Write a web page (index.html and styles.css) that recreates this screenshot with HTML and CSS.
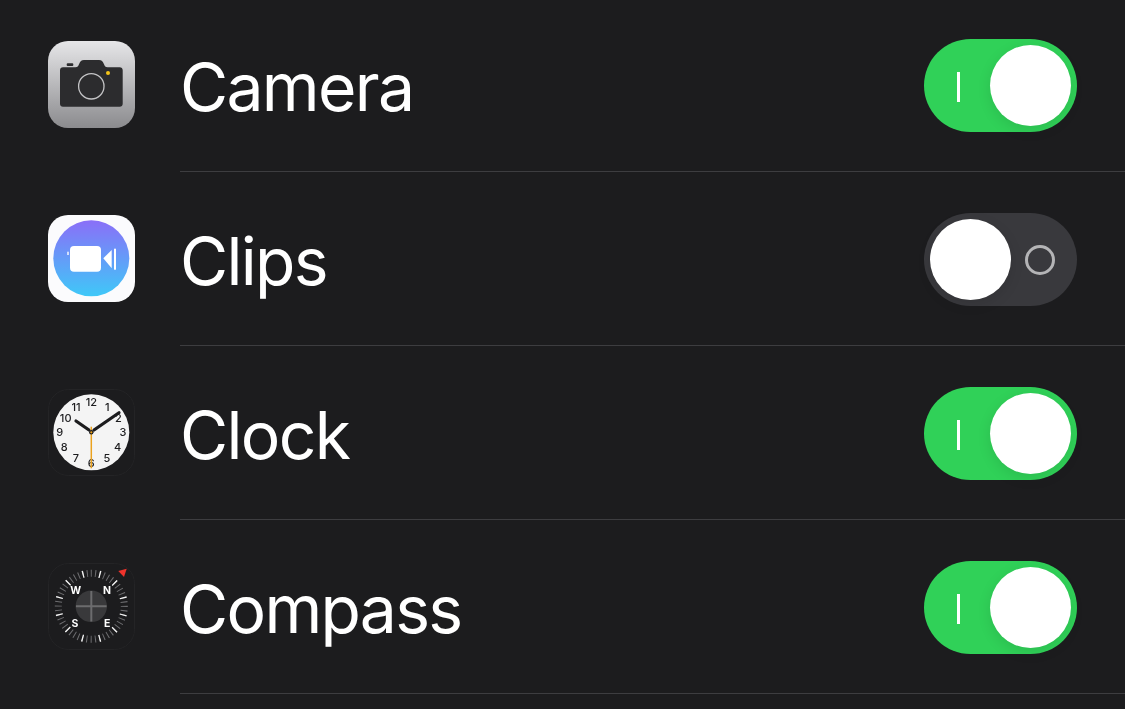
FILE: index.html
```html
<!DOCTYPE html>
<html lang="en">
<head>
<meta charset="utf-8">
<title>Apps</title>
<link rel="stylesheet" href="styles.css">
</head>
<body>
<ul class="list">
  <li class="row">
    <svg class="icon" viewBox="0 0 87 87">
      <defs><linearGradient id="camBg" x1="0" y1="0" x2="0" y2="1"><stop offset="0" stop-color="#e6e6e8"/><stop offset="1" stop-color="#8b8b8e"/></linearGradient></defs>
      <rect width="87" height="87" rx="20" fill="url(#camBg)"/>
      <path d="M15 26.3H27.5C29.5 26.3 30.3 25 31 23.3C32 20.5 33.5 19 36 19H51C53.5 19 55 20.5 56 23.3C56.7 25 57.5 26.3 59.5 26.3H71.7C73.5 26.3 74.7 27.5 74.7 29.3V62.7C74.7 64.5 73.5 65.7 71.7 65.7H15C13.2 65.7 12 64.5 12 62.7V29.3C12 27.5 13.2 26.3 15 26.3Z" fill="#2c2c2e"/>
      <rect x="18.7" y="22.3" width="6.6" height="2.6" rx="1" fill="#2c2c2e"/>
      <circle cx="43.3" cy="45.3" r="12.7" fill="none" stroke="#c4c4c6" stroke-width="1.3"/>
      <circle cx="60" cy="32" r="2" fill="#f5c518"/>
    </svg>
    <div class="body"><span class="name">Camera</span><span class="toggle on"><i class="bar"></i><i class="thumb"></i></span></div>
  </li>
  <li class="row">
    <svg class="icon" viewBox="0 0 87 87">
      <defs><linearGradient id="clipBg" x1="0" y1="0" x2="0" y2="1"><stop offset="0" stop-color="#8a6ff8"/><stop offset="1" stop-color="#3fc8f8"/></linearGradient></defs>
      <rect width="87" height="87" rx="20" fill="#fbfbfd"/>
      <circle cx="43.3" cy="43.3" r="38" fill="url(#clipBg)"/>
      <rect x="22" y="31" width="31" height="25.7" rx="4" fill="#fff"/>
      <path d="M55.3 43.3L63.7 35V53.3Z" fill="#fff"/>
      <rect x="66" y="33.7" width="2" height="21" fill="#fff"/>
      <rect x="19.3" y="36.7" width="1.4" height="3.3" fill="#fff"/>
    </svg>
    <div class="body"><span class="name">Clips</span><span class="toggle"><i class="thumb"></i><i class="ring"></i></span></div>
  </li>
  <li class="row">
    <svg class="icon" viewBox="0 0 87 87">
      <rect x="0.5" y="0.5" width="86" height="86" rx="20" fill="#1c1c1e" stroke="#242426"/>
      <circle cx="43.3" cy="43.3" r="38" fill="#f4f4f4"/>
      <g class="clock-num">
        <text x="43.3" y="16.7">12</text><text x="59.3" y="21.7">1</text><text x="70.3" y="32.7">2</text>
        <text x="75" y="47.3">3</text><text x="69.7" y="62.3">4</text><text x="59" y="73.3">5</text>
        <text x="43.3" y="78.3">6</text><text x="28" y="73.3">7</text><text x="16.3" y="62.3">8</text>
        <text x="11.7" y="47.3">9</text><text x="17.7" y="32.7">10</text><text x="28" y="21.7">11</text>
      </g>
      <path d="M41 41L28 32M46 41L71 23.7" stroke="#1c1c1e" stroke-width="3.2" stroke-linecap="round" fill="none"/>
      <path d="M43.3 37.7V79.3" stroke="#eba21e" stroke-width="1.5"/>
      <circle cx="43.3" cy="43.3" r="2.2" fill="#1c1c1e"/>
      <circle cx="43.3" cy="43.3" r="1.1" fill="#eba21e"/>
    </svg>
    <div class="body"><span class="name">Clock</span><span class="toggle on"><i class="bar"></i><i class="thumb"></i></span></div>
  </li>
  <li class="row">
    <svg class="icon" viewBox="0 0 87 87">
      <rect x="0.5" y="0.5" width="86" height="86" rx="20" fill="#1c1c1e" stroke="#242426"/>
      <circle class="ticks-dim" cx="43.3" cy="43.3" r="33" transform="rotate(-90.9 43.3 43.3)"/>
      <circle class="ticks-bright" cx="43.3" cy="43.3" r="33" transform="rotate(-76.1 43.3 43.3)"/>
      <circle cx="43.3" cy="43.3" r="15.7" fill="#39393b"/>
      <path d="M43.3 28V58.6M28 43.3H58.6" stroke="#6c6c6e" stroke-width="2"/>
      <path d="M78.7 5.7L70.3 8L76 14Z" fill="#f0332c"/>
      <g class="compass-dir">
        <text x="59" y="31">N</text><text x="27.7" y="31">W</text><text x="27" y="64">S</text><text x="59.3" y="64">E</text>
      </g>
    </svg>
    <div class="body"><span class="name">Compass</span><span class="toggle on"><i class="bar"></i><i class="thumb"></i></span></div>
  </li>
</ul>
</body>
</html>
```
FILE: styles.css
```css
* { box-sizing: border-box; }
html, body { margin: 0; height: 100%; overflow: hidden; background: #1c1c1e; }
body { font-family: Inter, "Liberation Sans", sans-serif; color: #fff; }
.list { list-style: none; margin: -2px 0 0; padding: 0; }
.row { display: flex; align-items: center; height: 174px; padding-left: 48px; }
.icon { width: 87px; height: 87px; flex: none; margin: 0 45px 1px 0; will-change: transform; }
.body { flex: 1; height: 100%; display: flex; align-items: center; justify-content: space-between; padding: 2px 48px 0 0; border-bottom: 1px solid #3d3d40; }
.name { font-size: 66px; font-weight: 400; letter-spacing: -1.7px; line-height: 1; padding-top: 2px; will-change: transform; }
.toggle { position: relative; display: flex; flex: none; width: 153px; height: 93px; padding: 6px; border-radius: 47px; background: #39393d; }
.toggle.on { justify-content: flex-end; background: #30d158; }
.thumb { display: block; width: 81px; height: 81px; border-radius: 50%; background: #fff; box-shadow: 0 4px 14px rgba(0,0,0,.1); }
.bar { position: absolute; left: 33px; top: 33px; width: 3px; height: 30px; background: #fff; }
.ring { position: absolute; left: 101px; top: 32px; width: 30px; height: 30px; border: 3px solid #b4b4b6; border-radius: 50%; }
.clock-num text { font-size: 11px; font-weight: 500; fill: #1c1c1e; text-anchor: middle; }
.compass-dir text { font-size: 10.5px; font-weight: 700; fill: #fff; text-anchor: middle; }
.ticks-dim { fill: none; stroke: #6e6e71; stroke-width: 7; stroke-dasharray: 1 3.32; }
.ticks-bright { fill: none; stroke: #f2f2f2; stroke-width: 7; stroke-dasharray: 1.3 15.98; }
```
